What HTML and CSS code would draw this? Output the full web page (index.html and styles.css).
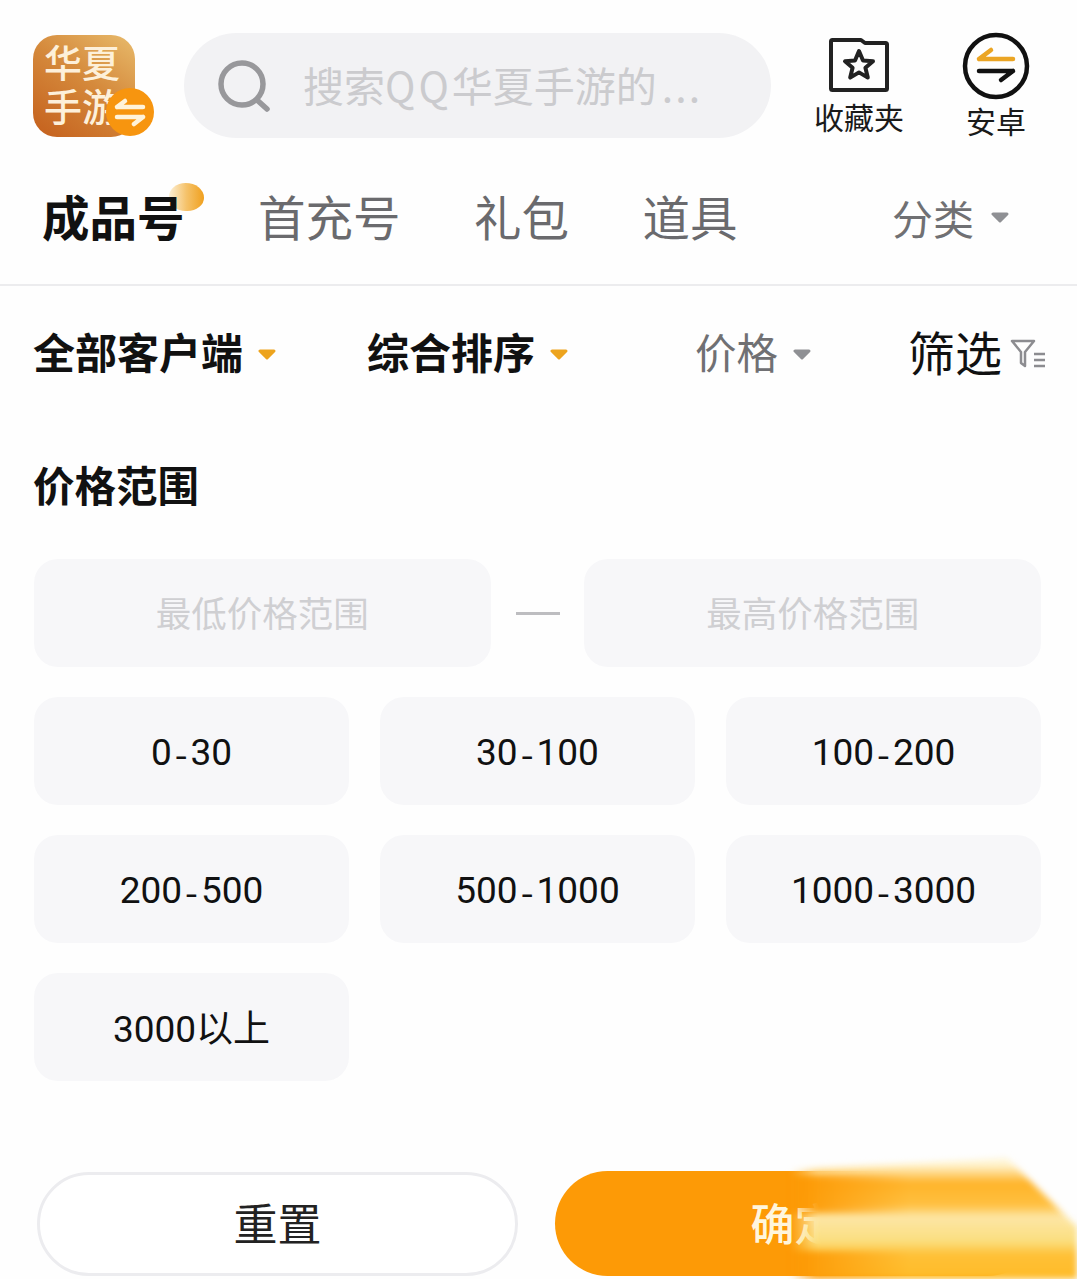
FILE: index.html
```html
<!DOCTYPE html>
<html lang="zh-CN">

<head>
  <meta charset="UTF-8">
  <meta name="viewport" content="width=device-width, initial-scale=1.0">
  <link rel="stylesheet" href="styles.css">
  <title>QQ华夏手游</title>
</head>

<body>
  <div class="page">

    <header class="top-bar">
      <div class="logo">
        <span class="logo-text">华夏<br>手游</span>
        <span class="logo-badge">
          <svg width="34" height="30" viewBox="0 0 34 30" fill="none" stroke="#fff3da" stroke-width="4.5" stroke-linecap="round" stroke-linejoin="round">
            <path d="M4 10H30M4 10L12 4" />
            <path d="M4 20H30M30 20L21 27" />
          </svg>
        </span>
      </div>
      <div class="search">
        <svg class="search-icon" width="54" height="54" viewBox="0 0 54 54" fill="none" stroke="#98989b" stroke-width="5.5" stroke-linecap="round">
          <circle cx="25" cy="25" r="21" />
          <path d="M40 41L50 50" />
        </svg>
        <span class="search-text">搜索<span class="search-qq">QQ</span>华夏手游的<span class="search-dots">...</span></span>
      </div>
      <a class="top-link link-fav">
        <svg width="60" height="54" viewBox="0 0 60 54" fill="none" stroke="#222" stroke-width="4" stroke-linejoin="round">
          <path d="M2 3.5Q2 2 3.5 2H32L36 5H56.5Q58 5 58 6.5V50.5Q58 52 56.5 52H3.5Q2 52 2 50.5Z" />
          <path d="M30 13L34 22.5L44 23.3L36.4 29.8L38.8 39.6L30 34.4L21.2 39.6L23.6 29.8L16 23.3L26 22.5Z" />
        </svg>
        <span>收藏夹</span>
      </a>
      <a class="top-link link-android">
        <svg width="68" height="68" viewBox="0 0 68 68" fill="none" stroke-width="4.5" stroke-linecap="round" stroke-linejoin="round">
          <circle cx="34" cy="34" r="31" stroke="#111" />
          <path d="M17 27H51M17 27L29 18" stroke="#eba524" />
          <path d="M17 39H51M51 39L39 48" stroke="#111" />
        </svg>
        <span>安卓</span>
      </a>
    </header>

    <nav class="tabs">
      <a class="tab tab-active">成品号<i class="tab-dot"></i></a>
      <a class="tab">首充号</a>
      <a class="tab">礼包</a>
      <a class="tab">道具</a>
      <a class="tab-more">分类
        <svg class="caret" width="18" height="11" viewBox="0 0 18 11"><path d="M2 2H16L9 9Z" fill="#8f9094" stroke="#8f9094" stroke-width="3" stroke-linejoin="round" /></svg>
      </a>
    </nav>

    <div class="filters">
      <div class="filter filter-on">全部客户端
        <svg class="caret" width="18" height="11" viewBox="0 0 18 11"><path d="M2 2H16L9 9Z" fill="#eda41e" stroke="#eda41e" stroke-width="3" stroke-linejoin="round" /></svg>
      </div>
      <div class="filter filter-on">综合排序
        <svg class="caret" width="18" height="11" viewBox="0 0 18 11"><path d="M2 2H16L9 9Z" fill="#eda41e" stroke="#eda41e" stroke-width="3" stroke-linejoin="round" /></svg>
      </div>
      <div class="filter filter-off">价格
        <svg class="caret" width="18" height="11" viewBox="0 0 18 11"><path d="M2 2H16L9 9Z" fill="#8f9094" stroke="#8f9094" stroke-width="3" stroke-linejoin="round" /></svg>
      </div>
      <div class="filter filter-screen">筛选
        <svg class="caret" width="36" height="30" viewBox="0 0 36 30" fill="none" stroke="#8c8c90" stroke-width="2.5" stroke-linejoin="round">
          <path d="M2 2H24L15 13V27L11 24V13Z" />
          <path d="M24 15H35M24 21H35M24 27H35" />
        </svg>
      </div>
    </div>

    <section class="price">
      <h2 class="price-title">价格范围</h2>
      <div class="range">
        <div class="range-input">最低价格范围</div>
        <div class="range-dash"></div>
        <div class="range-input">最高价格范围</div>
      </div>
      <div class="options">
        <div class="option">0<span class="option-dash">-</span>30</div>
        <div class="option">30<span class="option-dash">-</span>100</div>
        <div class="option">100<span class="option-dash">-</span>200</div>
        <div class="option">200<span class="option-dash">-</span>500</div>
        <div class="option">500<span class="option-dash">-</span>1000</div>
        <div class="option">1000<span class="option-dash">-</span>3000</div>
        <div class="option option-cjk">3000以上</div>
      </div>
    </section>

    <footer class="actions">
      <button class="btn-reset">重置</button>
      <button class="btn-ok">确定</button>
      <div class="swoosh"><div class="swoosh-shape"></div></div>
    </footer>

  </div>
</body>

</html>
```

FILE: styles.css
```css
* {
  box-sizing: border-box;
}

body {
  margin: 0;
  background-color: #fefefe;
  font-family: "Noto Sans CJK SC", "Noto Sans", sans-serif;
  color: #111;
}

.page {
  width: 1077px;
  height: 1279px;
  overflow: hidden;
  position: relative;
}

/* top bar */
.top-bar {
  display: flex;
  align-items: flex-start;
  height: 174px;
  padding: 33px 0 0 33px;
}

.logo {
  position: relative;
  width: 102px;
  height: 102px;
  margin-top: 2px;
  border-radius: 24px;
  background: linear-gradient(215deg, #e8bb6c 0%, #d58a3c 45%, #c45f1c 100%);
}

.logo-text {
  display: block;
  padding: 4px 0 0 11px;
  font-size: 38px;
  line-height: 44px;
  font-weight: 500;
  color: #fdf0da;
  white-space: nowrap;
}

.logo-badge {
  position: absolute;
  left: 73px;
  top: 53px;
  width: 48px;
  height: 48px;
  display: flex;
  align-items: center;
  justify-content: center;
  border-radius: 50%;
  background-color: #f7950f;
}

.search {
  width: 587px;
  height: 105px;
  margin-left: 49px;
  display: flex;
  align-items: center;
  padding-left: 33px;
  border-radius: 53px;
  background-color: #f2f2f4;
}

.search-icon {
  flex: none;
  margin-top: 1px;
}

.search-text {
  margin: 0 0 4px 32px;
  font-size: 41px;
  color: #cbcbce;
  white-space: nowrap;
}

.search-qq {
  letter-spacing: 3px;
}

.search-dots {
  margin-left: 5px;
  letter-spacing: 2px;
}

.top-link {
  display: flex;
  flex-direction: column;
  align-items: center;
  font-size: 30px;
  color: #1a1a1a;
}

.top-link span {
  line-height: 40px;
}

.link-fav {
  width: 100px;
  margin-left: 38px;
  padding-top: 5px;
  gap: 4px;
}

.link-android {
  width: 100px;
  margin-left: 37px;
  margin-top: -1px;
  gap: 0;
}

/* tabs */
.tabs {
  display: flex;
  align-items: center;
  height: 112px;
  padding: 0 68px 24px 42px;
  border-bottom: 2px solid #ececee;
  gap: 73.5px;
}

.tab {
  position: relative;
  margin-top: -3px;
  font-size: 47.5px;
  line-height: 64px;
  color: #6a6a6d;
  white-space: nowrap;
}

.tab-active {
  font-weight: 700;
  color: #111;
}

.tab-dot {
  position: absolute;
  z-index: -1;
  left: 127px;
  top: -1px;
  width: 35px;
  height: 28px;
  border-radius: 50% 55% 50% 50%;
  background: linear-gradient(90deg, #fdf0d6 0%, #f5c26a 50%, #f0a01e 100%);
}

.tab-more {
  margin-left: auto;
  display: flex;
  align-items: center;
  gap: 17px;
  font-size: 41px;
  line-height: 64px;
  color: #707073;
  white-space: nowrap;
}

/* filter row */
.filters {
  display: grid;
  grid-template-columns: 334px 328px 213px auto;
  align-items: center;
  height: 136px;
  padding: 0 0 6px 33px;
}

.filter {
  display: flex;
  align-items: center;
  gap: 15px;
  font-size: 42px;
  line-height: 60px;
  white-space: nowrap;
}

.filter .caret {
  margin-top: 6px;
}

.filter-on {
  font-weight: 700;
}

.filter-off {
  font-size: 41.5px;
  color: #707073;
}

.filter-screen {
  font-size: 47px;
  gap: 8px;
}

/* price range */
.price {
  padding: 0 36px 0 34px;
}

.price-title {
  margin: 0 0 0 -1px;
  padding-top: 26px;
  font-size: 41.5px;
  line-height: 72px;
  font-weight: 700;
}

.range {
  display: flex;
  align-items: center;
  margin-top: 39px;
}

.range-input {
  width: 457px;
  height: 108px;
  display: flex;
  align-items: center;
  justify-content: center;
  padding-bottom: 4px;
  border-radius: 24px;
  background-color: #f7f7f9;
  font-size: 35.5px;
  color: #cfcfd2;
}

.range-dash {
  width: 45px;
  height: 3px;
  margin: 0 24px 0 25px;
  background-color: #bdbdc0;
}

.options {
  display: grid;
  grid-template-columns: repeat(3, 315px);
  grid-auto-rows: 108px;
  column-gap: 31px;
  row-gap: 30px;
  margin-top: 30px;
}

.option {
  display: flex;
  align-items: center;
  justify-content: center;
  padding-top: 2px;
  border-radius: 24px;
  background-color: #f7f7f9;
  font-family: Roboto, "Noto Sans CJK SC", sans-serif;
  font-size: 37px;
  color: #111;
}

.option-cjk {
  padding: 0 0 2px;
}

.option-dash {
  padding: 0 3px;
  font-family: "Noto Sans CJK SC", sans-serif;
}

/* bottom buttons */
.actions {
  position: absolute;
  left: 37px;
  right: 37px;
  bottom: 3px;
  display: flex;
  align-items: flex-end;
  gap: 37px;
}

.btn-reset,
.btn-ok {
  font-family: inherit;
  border-radius: 53px;
  font-size: 44px;
  padding: 0 0 4px;
}

.btn-reset {
  width: 481px;
  height: 104px;
  background-color: #fff;
  border: 3px solid #ececef;
  color: #222;
}

.btn-ok {
  width: 485px;
  height: 105px;
  border: none;
  background-color: #fd9a06;
  color: #fff6dd;
  font-weight: 500;
  padding-right: 6px;
}

.swoosh {
  position: absolute;
  left: 743px;
  bottom: -3px;
  width: 297px;
  height: 124px;
  filter: blur(3px);
}

.swoosh-shape {
  width: 100%;
  height: 100%;
  clip-path: polygon(0 15px, 227px 3px, 297px 72px, 297px 124px, 0 124px);
  background:
    linear-gradient(90deg, #fd9a06 20px, rgba(253, 154, 6, 0) 130px) 0 20px / 100% 38px no-repeat,
    linear-gradient(90deg, #fd9a06 20px, rgba(253, 154, 6, 0) 130px) 0 96px / 100% 28px no-repeat,
    linear-gradient(180deg, #fff8e0 0px, #fff4d0 10px, #ffb42a 28px, #ffc040 50px, #fde6a6 62px, #fbdf80 86px, #ffc036 100px, #ffbc28 124px);
  -webkit-mask-image: linear-gradient(90deg, transparent 10px, #000 36px);
  mask-image: linear-gradient(90deg, transparent 10px, #000 36px);
}
```
